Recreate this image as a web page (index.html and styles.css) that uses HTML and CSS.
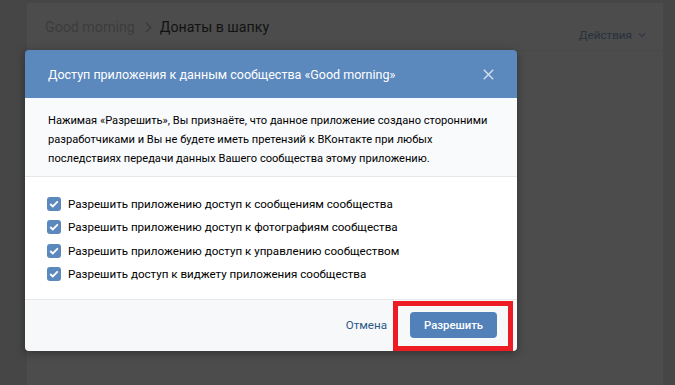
FILE: index.html
```html
<!DOCTYPE html>
<html lang="ru">
<head>
<meta charset="utf-8">
<title>Донаты в шапку</title>
<link rel="stylesheet" href="styles.css">
</head>
<body>
<div class="page">
  <div class="card">
    <div class="card-head">
      <div class="crumbs">
        <span class="crumb">Good morning</span>
        <svg class="crumb-sep" width="7" height="11" viewBox="0 0 7 11"><path d="M1 0.8 L5.8 5.5 L1 10.2" fill="none" stroke="#3a3a3a" stroke-width="1.3"/></svg>
        <span class="crumb-cur">Донаты в шапку</span>
      </div>
      <div class="actions">Действия
        <svg width="8" height="6" viewBox="0 0 8 6"><path d="M1 1.5 L4 4.5 L7 1.5" fill="none" stroke="#2f3844" stroke-width="1.2"/></svg>
      </div>
    </div>
  </div>
</div>

<div class="modal">
  <div class="modal-head">
    <div class="modal-title">Доступ приложения к данным сообщества «Good morning»</div>
    <svg class="modal-close" width="11" height="11" viewBox="0 0 11 11"><path d="M0.8 0.8 L10.2 10.2 M10.2 0.8 L0.8 10.2" stroke="#d0dcea" stroke-width="1.5" fill="none"/></svg>
  </div>
  <div class="modal-info">Нажимая «Разрешить», Вы признаёте, что данное приложение создано сторонними разработчиками и Вы не будете иметь претензий к ВКонтакте при любых последствиях передачи данных Вашего сообщества этому приложению.</div>
  <div class="modal-checks">
    <div class="check"><span class="box"><svg width="10" height="8" viewBox="0 0 10 8"><path d="M1.2 4 L3.8 6.4 L8.8 1.4" fill="none" stroke="#fff" stroke-width="1.8"/></svg></span>Разрешить приложению доступ к сообщениям сообщества</div>
    <div class="check"><span class="box"><svg width="10" height="8" viewBox="0 0 10 8"><path d="M1.2 4 L3.8 6.4 L8.8 1.4" fill="none" stroke="#fff" stroke-width="1.8"/></svg></span>Разрешить приложению доступ к фотографиям сообщества</div>
    <div class="check"><span class="box"><svg width="10" height="8" viewBox="0 0 10 8"><path d="M1.2 4 L3.8 6.4 L8.8 1.4" fill="none" stroke="#fff" stroke-width="1.8"/></svg></span>Разрешить приложению доступ к управлению сообществом</div>
    <div class="check"><span class="box"><svg width="10" height="8" viewBox="0 0 10 8"><path d="M1.2 4 L3.8 6.4 L8.8 1.4" fill="none" stroke="#fff" stroke-width="1.8"/></svg></span>Разрешить доступ к виджету приложения сообщества</div>
  </div>
  <div class="modal-foot">
    <span class="cancel">Отмена</span>
    <span class="allow">Разрешить</span>
  </div>
  <div class="highlight"></div>
</div>
</body>
</html>
```
FILE: styles.css
```css
html, body {
  margin: 0;
  padding: 0;
}
body {
  background: #464646;
  font-family: Roboto, "Liberation Sans", Arial, sans-serif;
  width: 675px;
  height: 385px;
  overflow: hidden;
  position: relative;
}
.page {
  padding: 3px 12px 0 27px;
  height: 382px;
}
.card {
  background: #4c4c4c;
  height: 100%;
  box-shadow: 1px 0 0 #474747;
}
.card-head {
  height: 47px;
  border-bottom: 1px solid #494949;
  display: flex;
  align-items: center;
  justify-content: space-between;
  padding: 0 17px 0 18px;
}
.crumbs {
  display: flex;
  align-items: center;
  font-size: 14.2px;
  margin-top: 1px;
}
.crumb { color: #3c3c3c; }
.crumb-sep { margin: 0 8px 0 10px; }
.crumb-cur { color: #121212; }
.actions {
  font-size: 11.7px;
  color: #28313c;
  display: flex;
  align-items: center;
  gap: 6px;
  margin-top: 16px;
}
.modal {
  position: absolute;
  left: 25px;
  top: 50px;
  width: 492px;
  border-radius: 4px;
  box-shadow: 0 2px 10px rgba(0,0,0,0.35);
}
.modal-head {
  height: 48px;
  background: #5b88bd;
  border-radius: 4px 4px 0 0;
  display: flex;
  align-items: center;
  justify-content: space-between;
  padding: 0 23px 0 23px;
}
.modal-title {
  color: #fff;
  font-size: 12.5px;
  margin-top: 1px;
}
.modal-info {
  background: #f9fafc;
  padding: 13px 23px 8px 23px;
  font-size: 11.1px;
  line-height: 19px;
  color: #000;
  border-bottom: 1px solid #e7e8ec;
  height: 57px;
}
.modal-checks {
  background: #fff;
  padding: 15.5px 23px 13.3px 22px;
  border-bottom: 1px solid #e7e8ec;
}
.check {
  display: flex;
  align-items: center;
  height: 23.3px;
  font-size: 11.6px;
  color: #000;
}
.box {
  width: 14px;
  height: 14px;
  border-radius: 3px;
  background: #5b88bd;
  display: inline-flex;
  align-items: center;
  justify-content: center;
  margin-right: 7px;
}
.modal-foot {
  background: #f7f8fa;
  height: 51px;
  border-radius: 0 0 4px 4px;
  display: flex;
  align-items: center;
  justify-content: flex-end;
  padding: 0 20px;
}
.cancel {
  color: #2a5885;
  font-size: 11.6px;
  margin-right: 23px;
}
.allow {
  background: #5181b8;
  color: #fff;
  font-size: 11.3px;
  font-weight: 500;
  border-radius: 4px;
  width: 87px;
  height: 26px;
  display: inline-flex;
  align-items: center;
  justify-content: center;
}
.highlight {
  position: absolute;
  left: 368px;
  top: 251px;
  width: 110px;
  height: 40px;
  border: 5px solid #ed1c24;
}
```
